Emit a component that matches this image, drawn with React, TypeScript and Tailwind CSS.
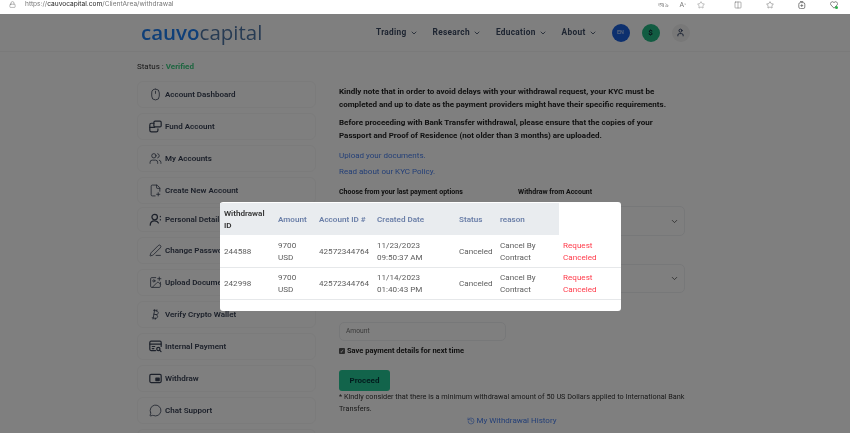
import { Bitcoin, ChevronDown, Columns2, History, ImagePlus, Lock, MessageCircle, Mouse, PenLine, Star, Users, User, FilePlus2 } from "lucide-react";

const stroke = { fill: "none", stroke: "currentColor", strokeWidth: 1.5, strokeLinecap: "round" as const, strokeLinejoin: "round" as const };

function FundIcon() {
  return (
    <svg width="13" height="13" viewBox="0 0 16 16" {...stroke}>
      <rect x="6" y="1.500" width="9" height="7" rx="1.500" />
      <path d="M6 4H3a2 2 0 0 0-2 2v6.500a2 2 0 0 0 2 2h6a2 2 0 0 0 2-2V11" />
      <path d="M1 9h6" />
    </svg>
  );
}
function PersonIcon() {
  return (
    <svg width="13" height="13" viewBox="0 0 16 16" {...stroke}>
      <circle cx="7" cy="5" r="3.400" />
      <path d="M1.500 15c0-3.400 2.400-5.400 5.500-5.400s4 1 4.600 2.600" />
      <path d="M14 4v.6M14 8v.6" />
    </svg>
  );
}
function PaymentIcon() {
  return (
    <svg width="13" height="13" viewBox="0 0 16 16" {...stroke}>
      <path d="M8 13H2.500A1.500 1.500 0 0 1 1 11.500V3a1.500 1.500 0 0 1 1.500-1.500h11A1.500 1.500 0 0 1 15 3v5" />
      <path d="M1 5h14M4 8h3M4 10.500h2" />
      <circle cx="11.500" cy="11" r="2" />
      <path d="M13 12.500l1.800 1.800" />
    </svg>
  );
}
function WithdrawIcon() {
  return (
    <svg width="13" height="13" viewBox="0 0 16 16" {...stroke}>
      <rect x="1" y="3" width="14" height="10" rx="1.500" />
      <rect x="8.500" y="7.500" width="4" height="3" fill="currentColor" />
    </svg>
  );
}

const items = [
  { label: "Account Dashboard", icon: <Mouse size={13} strokeWidth={1.500} />, h: "h-[27px]", mb: "mb-[5px]" },
  { label: "Fund Account", icon: <FundIcon />, h: "h-[27px]", mb: "mb-[5px]" },
  { label: "My Accounts", icon: <Users size={13} strokeWidth={1.500} />, h: "h-[27px]", mb: "mb-[5px]" },
  { label: "Create New Account", icon: <FilePlus2 size={13} strokeWidth={1.500} />, h: "h-[27px]", mb: "mb-[3px]" },
  { label: "Personal Details", icon: <PersonIcon />, h: "h-[25px]", mb: "mb-[5px]" },
  { label: "Change Password", icon: <PenLine size={13} strokeWidth={1.500} />, h: "h-[27px]", mb: "mb-[5px]" },
  { label: "Upload Documents", icon: <ImagePlus size={13} strokeWidth={1.500} />, h: "h-[27px]", mb: "mb-[5px]" },
  { label: "Verify Crypto Wallet", icon: <Bitcoin size={13} strokeWidth={1.500} />, h: "h-[27px]", mb: "mb-[5px]" },
  { label: "Internal Payment", icon: <PaymentIcon />, h: "h-[27px]", mb: "mb-[5px]" },
  { label: "Withdraw", icon: <WithdrawIcon />, h: "h-[27px]", mb: "mb-[5px]" },
  { label: "Chat Support", icon: <MessageCircle size={13} strokeWidth={1.500} />, h: "h-[27px]", mb: "mb-[5px]" },
];

const rows = [
  { id: "244588", date: "11/23/2023", time: "09:50:37 AM" },
  { id: "242998", date: "11/14/2023", time: "01:40:43 PM" },
];

function Nav({ label }: { label: string }) {
  return (
    <span className="flex items-center gap-[3px] text-[8.300px] font-bold tracking-[0.3px] text-[#3c4a63]">
      {label}
      <ChevronDown size={8} strokeWidth={2.500} />
    </span>
  );
}

function Select({ className }: { className: string }) {
  return (
    <div className={"flex w-[167px] items-center justify-end rounded-[5px] border border-[#eef0f2] pr-[5px] " + className}>
      <ChevronDown size={9} strokeWidth={2} className="text-[#444]" />
    </div>
  );
}

export default function App() {
  return (
    <div className="relative h-[433px] w-[850px] overflow-hidden bg-white font-['Roboto',sans-serif] blur-[0.3px]">
      <div className="flex h-[14px] items-start justify-between bg-white pl-[9px] pr-[9px] text-[#666]">
        <div className="flex items-center gap-[9px]">
          <Lock size={7} strokeWidth={1.500} />
          <span className="font-['Inter',sans-serif] text-[6.600px] leading-[9px] text-[#777]">
            https://<span className="text-[#222]">cauvocapital.com</span>/ClientArea/withdrawal
          </span>
        </div>
        <div className="flex items-center gap-[11px] pr-[3px] pt-px">
          <span className="text-[6px] leading-[8px] text-[#777]">অiঌ</span>
          <span className="text-[7px] leading-[8px] text-[#777]">A<sup className="text-[4px]">»</sup></span>
          <Star size={8} strokeWidth={1.200} />
          <span className="w-[7px]" />
          <Columns2 size={8} strokeWidth={1.500} />
          <span className="w-[2px]" />
          <Star size={8} strokeWidth={1.500} />
          <span className="w-[2px]" />
          <svg width="8" height="8" viewBox="0 0 10 10" fill="none" stroke="currentColor">
            <rect x="1" y="2" width="7.500" height="7.500" rx="2" />
            <path d="M4.700 4v3.500M3 5.700h3.500M2.500 .6h4" />
          </svg>
          <span className="w-[2px]" />
          <span className="relative">
            <svg width="8" height="8" viewBox="0 0 10 10" fill="none" stroke="currentColor">
              <path d="M5 9L1 4.800a2.300 2.300 0 0 1 4-2.800 2.300 2.300 0 0 1 4 2.800z" />
            </svg>
            <span className="absolute bottom-0 right-0 h-[3px] w-[3px] rounded-full bg-[#2cb14a]" />
          </span>
        </div>
      </div>

      <header className="flex h-[38px] items-center border-b border-[#f4f4f4] pl-[141px]">
        <div className="w-[235px] text-[20.500px] leading-none font-['Open_Sans',sans-serif]">
          <span className="font-semibold text-[#1f7ef0]">cauvo</span>
          <span className="text-[#4f76a6]">capital</span>
        </div>
        <nav className="flex items-center gap-[15px]">
          <Nav label="Trading" />
          <Nav label="Research" />
          <Nav label="Education" />
          <Nav label="About" />
        </nav>
        <div className="ml-[15px] flex items-center gap-[12px]">
          <span className="flex h-[18px] w-[18px] items-center justify-center rounded-full bg-[#1a60dc] text-[5.500px] font-bold text-[#a8c4f5]">EN</span>
          <span className="flex h-[18px] w-[18px] items-center justify-center rounded-full bg-[#25b884] text-[8px] font-bold text-[#123]">$</span>
          <span className="flex h-[18px] w-[18px] items-center justify-center rounded-full bg-[#f0f0f0] text-[#2a3a5c]">
            <User size={9} strokeWidth={2.500} />
          </span>
        </div>
      </header>

      <main className="flex pl-[137px] pt-[9px]">
        <div className="w-[179px] shrink-0">
          <p className="mb-[8px] h-[12px] text-[8px] leading-[12px] text-[#333]">
            Status : <span className="font-bold text-[#3ccb80]">Verified</span>
          </p>
          {items.map((it) => (
            <div key={it.label} className={"flex items-center gap-[2px] rounded-[6px] border border-[#f6f6f6] pl-[11px] text-[8px] font-semibold text-[#3a4356] " + it.h + " " + it.mb}>
              <span className="flex w-[14px] shrink-0 justify-start">{it.icon}</span>
              {it.label}
            </div>
          ))}
          <div className="h-[27px] rounded-[6px] border border-[#f6f6f6]" />
        </div>

        <div className="ml-[23px] w-[352px] pt-[24px] text-[8px] text-[#222]">
          <p className="w-[345px] font-bold leading-[13px]">
            Kindly note that in order to avoid delays with your withdrawal request, your KYC must be completed and up to date as the payment providers might have their specific requirements.
          </p>
          <p className="mt-[5px] w-[345px] font-bold leading-[13px]">
            Before proceeding with Bank Transfer withdrawal, please ensure that the copies of your Passport and Proof of Residence (not older than 3 months) are uploaded.
          </p>
          <p className="mt-[7px] leading-[13px] text-[#4a80ee]">Upload your documents.</p>
          <p className="mt-[3px] leading-[13px] text-[#4a80ee]">Read about our KYC Policy.</p>
          <div className="mt-[8px] flex text-[7px] font-bold leading-[12px]">
            <span className="w-[179px]">Choose from your last payment options</span>
            <span>Withdraw from Account</span>
          </div>
          <Select className="ml-[179px] mt-[8px] h-[30px]" />
          <Select className="ml-[179px] mt-[28px] h-[29px]" />
          <div className="mt-[29px] flex h-[19px] w-[167px] items-center rounded-[5px] border border-[#eef0f2] pl-[6px] text-[6.700px] text-[#777]">Amount</div>
          <div className="mt-[5px] flex items-center gap-[2px] text-[7.500px] font-bold leading-[10px]">
            <span className="flex h-[6px] w-[6px] items-center justify-center rounded-[1px] bg-[#555] text-[5px] text-white">✓</span>
            Save payment details for next time
          </div>
          <div className="mt-[14px] flex h-[21px] w-[51px] items-center justify-center rounded-[3px] bg-[#25c896] text-[8px] font-bold text-[#04363a]">Proceed</div>
          <p className="text-[7.300px] leading-[12px] text-[#333]">
            * Kindly consider that there is a minimum withdrawal amount of 50 US Dollars applied to International Bank Transfers.
          </p>
          <div className="flex w-[345px] items-center justify-center gap-[2px] text-[8px] leading-[12px] text-[#4a80ee]">
            <History size={8} strokeWidth={1.800} />
            My Withdrawal History
          </div>
        </div>
      </main>

      <div className="absolute inset-x-0 bottom-0 top-[14px] bg-black/50" />

      <div className="absolute left-[220px] top-[202px] h-[109px] w-[401px] rounded-[3px] bg-white pt-px text-[8.100px] leading-[12px] text-[#5c5c5c]">
        <table className="w-[401px] table-fixed border-collapse">
          <colgroup>
            <col className="w-[54px]" />
            <col className="w-[41px]" />
            <col className="w-[58px]" />
            <col className="w-[82px]" />
            <col className="w-[41px]" />
            <col className="w-[63px]" />
            <col className="w-[62px]" />
          </colgroup>
          <thead>
            <tr className="h-[32px] text-[#6b7fa8]">
              <th className="bg-[#e9ecef] pl-[4px] text-left font-semibold text-[#333]">Withdrawal ID</th>
              <th className="bg-[#e9ecef] pl-[4px] text-left font-semibold">Amount</th>
              <th className="bg-[#e9ecef] pl-[4px] text-left font-semibold">Account ID #</th>
              <th className="bg-[#e9ecef] pl-[4px] text-left font-semibold">Created Date</th>
              <th className="bg-[#e9ecef] pl-[4px] text-left font-semibold">Status</th>
              <th className="bg-[#e9ecef] pl-[4px] text-left font-semibold">reason</th>
              <th />
            </tr>
          </thead>
          <tbody>
            {rows.map((r) => (
              <tr key={r.id} className="h-[32px] border-b border-[#e6e8ea]">
                <td className="pl-[4px]">{r.id}</td>
                <td className="pl-[4px]">9700<br />USD</td>
                <td className="pl-[4px]">42572344764</td>
                <td className="pl-[4px]">{r.date}<br />{r.time}</td>
                <td className="pl-[4px]">Canceled</td>
                <td className="pl-[4px]">Cancel By Contract</td>
                <td className="pl-[4px] text-[#ff3b4a]">Request Canceled</td>
              </tr>
            ))}
          </tbody>
        </table>
      </div>
    </div>
  );
}
